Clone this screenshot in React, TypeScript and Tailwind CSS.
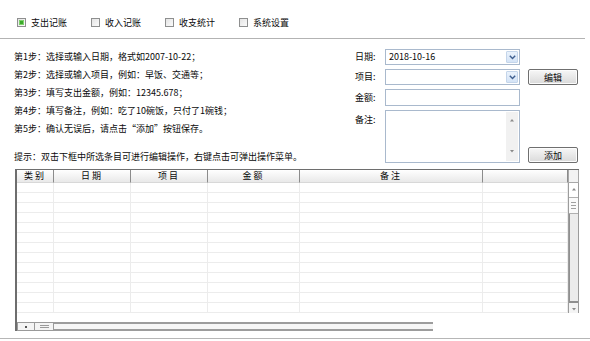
import type { ReactNode } from "react";

const tabs = [
  { label: "支出记账", checked: true },
  { label: "收入记账", checked: false },
  { label: "收支统计", checked: false },
  { label: "系统设置", checked: false },
];

const steps = [
  "第1步：选择或输入日期，格式如2007-10-22；",
  "第2步：选择或输入项目，例如：早饭、交通等；",
  "第3步：填写支出金额，例如：12345.678；",
  "第4步：填写备注，例如：吃了10碗饭，只付了1碗钱；",
  "第5步：确认无误后，请点击“添加”按钮保存。",
];

const columns = [
  { label: "类别", w: "w-[37px]" },
  { label: "日期", w: "w-[77px]" },
  { label: "项目", w: "w-[77px]" },
  { label: "金额", w: "w-[92px]" },
  { label: "备注", w: "w-[183px]" },
  { label: "", w: "w-[85px]" },
];

const rows = Array.from({ length: 13 }, (_, i) => i);

function CheckBox({ checked }: { checked: boolean }) {
  return (
    <span className="flex h-[9px] w-[9px] items-center justify-center border border-[#8e8f8f] bg-gradient-to-br from-[#e4e4e4] to-[#fbfbfb]">
      {checked && <span className="h-[5px] w-[5px] rounded-[1px] bg-[#3aa92a] ring-1 ring-inset ring-[#7fd26c]" />}
    </span>
  );
}

function Chevron() {
  return (
    <svg width="7" height="5" viewBox="0 0 7 5">
      <path d="M0.8 0.8 L3.5 3.6 L6.2 0.8" fill="none" stroke="#3f5f8f" strokeWidth="1.4" />
    </svg>
  );
}

function Select({ value }: { value?: string }) {
  return (
    <div className="flex h-[16px] w-[135px] border border-[#a9b9cd] bg-white p-px">
      <span className="flex-1 pl-[2px] text-[9px] leading-[12px]">{value}</span>
      <span className="flex w-[12px] items-center justify-center rounded-[1px] border border-[#c4d5ea] bg-gradient-to-b from-[#eaf2fc] to-[#d4e3f6]">
        <Chevron />
      </span>
    </div>
  );
}

function Button({ children }: { children: ReactNode }) {
  return (
    <div className="ml-[8px] flex h-[16px] w-[50px] items-center justify-center rounded-[2px] border border-[#6f6f6f] bg-gradient-to-b from-[#f7f7f7] to-[#dadada] text-[9px] leading-none shadow-[inset_0_0_0_1px_#fcfcfc]">
      {children}
    </div>
  );
}

function Label({ children }: { children: ReactNode }) {
  return <span className="w-[30px] text-[9px] leading-[16px]">{children}</span>;
}

function Arrow({ dir }: { dir: "up" | "down" | "left" }) {
  const d =
    dir === "up" ? "M1 3.5 L3 1 L5 3.5 Z" : dir === "down" ? "M1 1 L3 3.5 L5 1 Z" : "M3.5 1 L1 3 L3.5 5 Z";
  return (
    <svg width="6" height="6" viewBox="0 0 6 6">
      <path d={d} fill="#8a8a8a" />
    </svg>
  );
}

export default function App() {
  return (
    <div className="h-[341px] w-[590px] overflow-hidden bg-white font-['Noto_Sans_CJK_SC',sans-serif] text-[#0a0a0a]">
      {/* tab checkboxes */}
      <div className="flex h-[39px] w-[585px] items-center border-b border-[#b3b3b3] pl-[17px] pt-[7px]">
        {tabs.map((t) => (
          <div key={t.label} className="flex w-[74px] items-center gap-[5px] text-[9px] leading-none">
            <CheckBox checked={t.checked} />
            <span>{t.label}</span>
          </div>
        ))}
      </div>

      <div className="flex">
        {/* steps + hint */}
        <div className="w-[355px] pl-[14px] pt-[9px] text-[9px]">
          {steps.map((s) => (
            <div key={s} className="h-[18px] leading-[18px]">
              {s}
            </div>
          ))}
          <div className="mt-[10px] h-[18px] leading-[18px]">
            提示：双击下框中所选条目可进行编辑操作，右键点击可弹出操作菜单。
          </div>
        </div>

        {/* entry form */}
        <div className="flex flex-col gap-[4px] pt-[10px]">
          <div className="flex items-center">
            <Label>日期:</Label>
            <Select value="2018-10-16" />
          </div>
          <div className="flex items-center">
            <Label>项目:</Label>
            <Select />
            <Button>编辑</Button>
          </div>
          <div className="flex items-center">
            <Label>金额:</Label>
            <div className="h-[17px] w-[135px] border border-[#a9b9cd] bg-white" />
          </div>
          <div className="flex items-start">
            <span className="w-[30px] pt-[2px] text-[9px] leading-[16px]">备注:</span>
            <div className="flex h-[53px] w-[135px] justify-end border border-[#a9b9cd] bg-white p-px">
              <div className="flex w-[12px] flex-col items-center justify-between bg-[#f1f1f1] py-[6px]">
                <Arrow dir="up" />
                <Arrow dir="down" />
              </div>
            </div>
            <div className="self-end">
              <Button>添加</Button>
            </div>
          </div>
        </div>
      </div>

      {/* records table */}
      <div className="ml-[15px] mt-[3px] flex h-[162px] w-[564px] flex-col border-l-2 border-t border-[#6e6e6e] text-[9px]">
        <div className="flex h-[13px]">
          {columns.map((c, i) => (
            <div
              key={i}
              className={`${c.w} border-r border-b border-r-[#8c8c8c] border-b-[#d8d8d8] bg-gradient-to-b from-[#ffffff] to-[#e9e9e9] text-center leading-[12px] tracking-[2px]`}
            >
              {c.label}
            </div>
          ))}
          <div className="w-[11px] border-x border-b border-[#a8a8a8] bg-[#f3f3f3]" />
        </div>

        <div className="flex h-[130px]">
          <div className="flex flex-col">
            {rows.map((r) => (
              <div key={r} className="flex h-[10px] border-b border-[#ececec]">
                {columns.map((c, i) => (
                  <div key={i} className={`${c.w} border-r border-[#ececec]`} />
                ))}
              </div>
            ))}
          </div>
          <div className="flex w-[11px] flex-col border-x border-[#9c9c9c] bg-[#f4f4f4]">
            <div className="flex h-[15px] items-center justify-center border-b border-[#b0b0b0] bg-white">
              <Arrow dir="up" />
            </div>
            <div className="flex h-[16px] flex-col items-center justify-center gap-[2px] border-b border-[#b0b0b0] bg-[#fafafa]">
              <span className="h-px w-[5px] bg-[#a0a0a0]" />
              <span className="h-px w-[5px] bg-[#a0a0a0]" />
              <span className="h-px w-[5px] bg-[#a0a0a0]" />
            </div>
            <div className="flex-1 border-l border-b-2 border-[#8f8f8f] bg-[#ececec]" />
            <div className="flex h-[10px] items-end justify-center">
              <Arrow dir="down" />
            </div>
          </div>
        </div>

        <div className="h-[9px]" />

        <div className="flex h-[9px]">
          <div className="flex w-[18px] items-center justify-center border border-[#9a9a9a] bg-[#f4f4f4]">
            <span className="h-[2px] w-[2px] bg-[#555]" />
          </div>
          <div className="flex w-[19px] flex-col items-center justify-center gap-px border border-l-0 border-[#9a9a9a] bg-[#f4f4f4]">
            <span className="h-px w-[9px] bg-[#9a9a9a]" />
            <span className="h-px w-[9px] bg-[#9a9a9a]" />
          </div>
          <div className="w-[379px] border-y-2 border-[#9c9c9c] bg-[#f6f6f6]" />
        </div>
      </div>

      <div className="mt-[7px] border-t border-[#b6b6b6]" />
    </div>
  );
}
